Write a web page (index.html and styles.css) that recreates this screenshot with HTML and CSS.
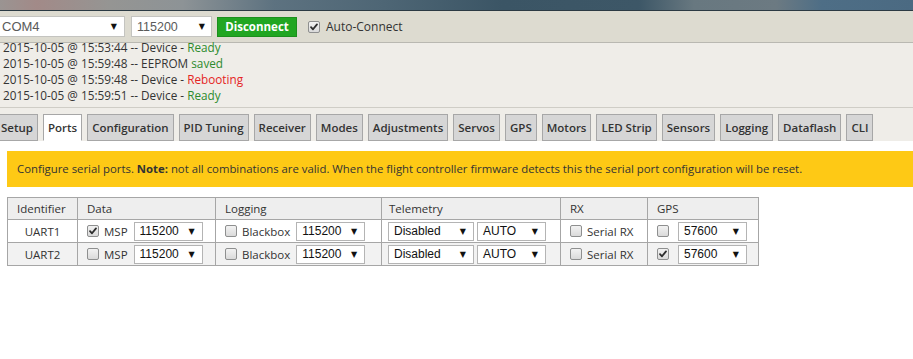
FILE: index.html
```html
<!DOCTYPE html>
<html>
<head>
<meta charset="utf-8">
<link rel="stylesheet" href="styles.css">
</head>
<body>
<div class="titlebar"></div>
<div class="header">
  <span class="select port"><span class="val">COM4</span><span class="arr">▼</span></span>
  <span class="select baud"><span class="val">115200</span><span class="arr">▼</span></span>
  <span class="btn">Disconnect</span>
  <span class="auto"><span class="cb"><svg viewBox="0 0 11 11"><path d="M2.2 5.6 L4.4 8 L8.8 2.6" /></svg></span>Auto-Connect</span>
</div>
<div class="log">
  <div class="line">2015-10-05 @ 15:53:44 -- Device - <span class="ok">Ready</span></div>
  <div class="line">2015-10-05 @ 15:59:48 -- EEPROM <span class="ok">saved</span></div>
  <div class="line">2015-10-05 @ 15:59:48 -- Device - <span class="bad">Rebooting</span></div>
  <div class="line">2015-10-05 @ 15:59:51 -- Device - <span class="ok">Ready</span></div>
</div>
<div class="tabs">
  <span class="tab first">Setup</span>
  <span class="tab active">Ports</span>
  <span class="tab">Configuration</span>
  <span class="tab">PID Tuning</span>
  <span class="tab">Receiver</span>
  <span class="tab">Modes</span>
  <span class="tab">Adjustments</span>
  <span class="tab">Servos</span>
  <span class="tab">GPS</span>
  <span class="tab">Motors</span>
  <span class="tab">LED Strip</span>
  <span class="tab">Sensors</span>
  <span class="tab">Logging</span>
  <span class="tab">Dataflash</span>
  <span class="tab">CLI</span>
</div>
<div class="content">
  <div class="note">Configure serial ports. <b>Note:</b> not all combinations are valid. When the flight controller firmware detects this the serial port configuration will be reset.</div>
  <table class="ports">
    <thead>
      <tr>
        <th class="c-id">Identifier</th>
        <th class="c-data">Data</th>
        <th class="c-log">Logging</th>
        <th class="c-tel">Telemetry</th>
        <th class="c-rx">RX</th>
        <th class="c-gps">GPS</th>
      </tr>
    </thead>
    <tbody>
      <tr>
        <td class="ident">UART1</td>
        <td><span class="cell"><span class="cb"><svg viewBox="0 0 11 11"><path d="M2.2 5.6 L4.4 8 L8.8 2.6" /></svg></span><span class="lbl">MSP</span><span class="select ts w68"><span class="val">115200</span><span class="arr">▼</span></span></span></td>
        <td><span class="cell"><span class="cb"></span><span class="lbl">Blackbox</span><span class="select ts w68"><span class="val">115200</span><span class="arr">▼</span></span></span></td>
        <td><span class="cell"><span class="select ts w86"><span class="val">Disabled</span><span class="arr">▼</span></span><span class="select ts w68 tight"><span class="val">AUTO</span><span class="arr">▼</span></span></span></td>
        <td><span class="cell"><span class="cb"></span><span class="lbl">Serial RX</span></span></td>
        <td><span class="cell"><span class="cb"></span><span class="select ts w68 gap9"><span class="val">57600</span><span class="arr">▼</span></span></span></td>
      </tr>
      <tr class="alt">
        <td class="ident">UART2</td>
        <td><span class="cell"><span class="cb"></span><span class="lbl">MSP</span><span class="select ts w68"><span class="val">115200</span><span class="arr">▼</span></span></span></td>
        <td><span class="cell"><span class="cb"></span><span class="lbl">Blackbox</span><span class="select ts w68"><span class="val">115200</span><span class="arr">▼</span></span></span></td>
        <td><span class="cell"><span class="select ts w86"><span class="val">Disabled</span><span class="arr">▼</span></span><span class="select ts w68 tight"><span class="val">AUTO</span><span class="arr">▼</span></span></span></td>
        <td><span class="cell"><span class="cb"></span><span class="lbl">Serial RX</span></span></td>
        <td><span class="cell"><span class="cb"><svg viewBox="0 0 11 11"><path d="M2.2 5.6 L4.4 8 L8.8 2.6" /></svg></span><span class="select ts w68 gap9"><span class="val">57600</span><span class="arr">▼</span></span></span></td>
      </tr>
    </tbody>
  </table>
</div>
</body>
</html>
```
FILE: styles.css
```css
* { box-sizing: border-box; }
html, body { margin: 0; padding: 0; }
body {
  width: 913px;
  height: 359px;
  overflow: hidden;
  background: #ffffff;
  font-family: "Open Sans", "Noto Sans", sans-serif;
  color: #333333;
}

.titlebar {
  height: 11px;
  border-bottom: 1px solid #2b3a43;
  background: linear-gradient(90deg, #9a9492 0%, #a28a88 4%, #959593 12%, #8d9396 20%, #5d7280 30%, #4e6675 42%, #3b5565 55%, #3d5767 70%, #687880 76%, #6c7a82 85%, #4e6e86 90%, #4b6a82 100%);
}

.header {
  height: 32px;
  background: #dddbd0;
  border-bottom: 1px solid #b9b8b1;
  display: flex;
  align-items: center;
  padding-left: 0;
}

.select {
  display: inline-flex;
  align-items: center;
  justify-content: space-between;
  background: #ffffff;
  border: 1px solid #b4b4b4;
  font-family: "Liberation Sans", Arial, sans-serif;
  color: #111;
}
.select .arr {
  font-family: "DejaVu Sans", sans-serif;
  font-size: 8px;
  color: #111;
}

.port {
  width: 127px;
  height: 21px;
  margin-left: -2px;
  padding: 0 7px 0 3px;
  font-size: 13px;
  color: #5a5a5a;
  border-color: #c4c4c0;
}
.baud {
  width: 81px;
  height: 21px;
  margin-left: 6px;
  padding: 0 6px 0 5px;
  font-size: 12.5px;
  color: #5a5a5a;
  border-color: #c4c4c0;
}

.btn {
  margin-left: 5px;
  width: 80px;
  height: 20px;
  background: #21a622;
  border: 1px solid #1c8f1d;
  color: #ffffff;
  font-weight: 700;
  font-size: 11.5px;
  display: inline-flex;
  align-items: center;
  justify-content: center;
}

.auto {
  margin-left: 11px;
  display: inline-flex;
  align-items: center;
  font-size: 12px;
  color: #333;
}
.auto .cb { margin-right: 6px; }

.cb {
  display: inline-block;
  width: 12px;
  height: 12px;
  border: 1px solid #8e8f8f;
  border-radius: 2px;
  background: linear-gradient(#f2f2f2, #dadada);
  flex: none;
}
.cb svg {
  display: block;
  width: 10px;
  height: 10px;
}
.cb path {
  fill: none;
  stroke: #2d2d2d;
  stroke-width: 2;
  stroke-linecap: round;
  stroke-linejoin: round;
}

.log {
  height: 64px;
  background: #efede8;
  font-size: 11.75px;
  color: #333;
  padding-left: 3px;
}
.log .line {
  height: 16px;
  line-height: 8px;
  white-space: nowrap;
}
.ok { color: #2e8b2e; }
.bad { color: #e52424; }

.tabs {
  background: #efede8;
  border-top: 1px solid #cfcdc6;
  padding-top: 6px;
  display: flex;
  gap: 5px;
}
.tab {
  height: 27px;
  line-height: 25px;
  padding: 0 4px;
  background: #d6d6d6;
  border: 1px solid #a7a7a7;
  font-size: 11.5px;
  font-weight: 600;
  color: #333;
  white-space: nowrap;
}
.tab.first { margin-left: -4px; }
.tab.active {
  background: #ffffff;
  border-bottom-color: #ffffff;
}

.content {
  padding: 10px 0 0 7px;
}

.note {
  height: 36px;
  line-height: 36px;
  background: #fec915;
  padding-left: 10px;
  font-size: 11.35px;
  color: #333;
  white-space: nowrap;
}
.note b { font-weight: 700; }

.ports {
  margin-top: 10px;
  border-collapse: collapse;
  font-size: 11.5px;
  color: #333;
}
.ports th, .ports td {
  border: 1px solid #a6a6a6;
  padding: 0 0 0 9px;
  text-align: left;
  font-weight: 400;
  white-space: nowrap;
}
.ports th { height: 22px; background: #eeeeee; }
.ports td { height: 23px; }
.ports tr.alt td { background: #f2f2f2; }
.ports td.ident { text-align: center; padding: 0; }

.c-id { width: 70px; }
.c-data { width: 138px; }
.c-log { width: 166px; }
.c-tel { width: 179px; }
.c-rx { width: 87px; }
.c-gps { width: 111px; }
.ports th.c-tel { padding-left: 7px; }

.cell {
  display: flex;
  align-items: center;
}
.cell .lbl { margin-left: 5px; }
.ts {
  height: 19px;
  font-size: 12px;
  padding: 0 7px 0 5px;
  margin-left: 6px;
}
.w68 { width: 69px; }
.w86 { width: 86px; margin-left: -3px; }
.ts.tight { margin-left: 3px; }
.ts.gap9 { margin-left: 9px; }
```
